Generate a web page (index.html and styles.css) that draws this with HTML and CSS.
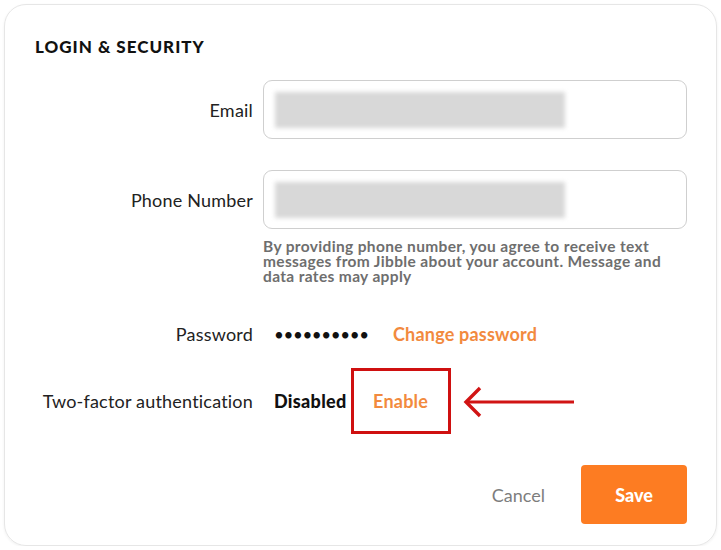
FILE: index.html
```html
<!DOCTYPE html>
<html lang="en">
<head>
    <meta charset="UTF-8">
    <meta name="viewport" content="width=device-width, initial-scale=1.0">
    <title>Login & Security</title>
    <link rel="stylesheet" href="styles.css">
</head>
<body>
    <div class="card">
        <h1 class="title">LOGIN &amp; SECURITY</h1>

        <div class="row row-input">
            <label class="label">Email</label>
            <div class="field">
                <div class="input"><span class="blur"></span></div>
            </div>
        </div>

        <div class="row row-input row-phone">
            <label class="label">Phone Number</label>
            <div class="field">
                <div class="input"><span class="blur"></span></div>
            </div>
        </div>
        <p class="hint">By providing phone number, you agree to receive text messages from Jibble about your account. Message and data rates may apply</p>

        <div class="row row-password">
            <span class="label">Password</span>
            <div class="value">
                <span class="dots">&bull;&bull;&bull;&bull;&bull;&bull;&bull;&bull;&bull;&bull;</span>
                <a class="link" href="#">Change password</a>
            </div>
        </div>

        <div class="row row-2fa">
            <span class="label">Two-factor authentication</span>
            <div class="value">
                <span class="status">Disabled</span>
                <span class="highlight"><a class="link" href="#">Enable</a></span>
                <svg class="arrow" width="112" height="34" viewBox="0 0 112 34">
                    <line x1="4" y1="17" x2="111" y2="17" stroke="#d11414" stroke-width="3"/>
                    <polyline points="17,3 3,17 17,31" fill="none" stroke="#d11414" stroke-width="3.4"/>
                </svg>
            </div>
        </div>

        <div class="actions">
            <button class="cancel">Cancel</button>
            <button class="save">Save</button>
        </div>
    </div>
</body>
</html>
```

FILE: styles.css
```css
* {
    margin: 0;
    padding: 0;
    box-sizing: border-box;
    font-family: 'Lato', 'Noto Sans', sans-serif;
}

body {
    background: #fff;
}

.card {
    margin: 4px 4px 0 4px;
    width: 713px;
    height: 542px;
    border: 1px solid #e6e6e6;
    border-radius: 22px;
    box-shadow: 0 1px 3px rgba(0,0,0,0.06);
    padding: 32px 29px 20px 30px;
}

.title {
    font-size: 17px;
    font-weight: 900;
    color: #111;
    line-height: 20px;
    letter-spacing: 1px;
}

.row {
    display: grid;
    grid-template-columns: 218px 1fr;
    column-gap: 10px;
    align-items: center;
}

.label {
    text-align: right;
    font-size: 18px;
    letter-spacing: 0.2px;
    color: #222;
}

.row-input {
    margin-top: 23px;
}

.row-phone {
    margin-top: 31px;
}

.input {
    height: 59px;
    border: 1px solid #cfcfcf;
    border-radius: 9px;
    padding: 11px 0 0 11px;
}

.blur {
    display: block;
    width: 290px;
    height: 36px;
    background: #d8d8d8;
    filter: blur(2px);
}

.hint {
    margin: 10px 0 0 228px;
    font-size: 15.5px;
    font-weight: 700;
    line-height: 15px;
    letter-spacing: 0.35px;
    color: #6e6e6e;
    max-width: 418px;
}

.row-password {
    margin-top: 36px;
    height: 28px;
}

.value {
    display: flex;
    align-items: center;
    padding-left: 11px;
}

.dots {
    font-size: 17px;
    letter-spacing: -0.4px;
    color: #111;
    width: 119px;
}

.link {
    color: #f28a3e;
    font-weight: 700;
    font-size: 18px;
    letter-spacing: 0.2px;
    text-decoration: none;
}

.row-2fa {
    margin-top: 20px;
}

.status {
    font-weight: 900;
    font-size: 18px;
    letter-spacing: 0.3px;
    color: #111;
}

.highlight {
    margin-left: 4px;
    width: 100px;
    height: 66px;
    border: 3px solid #cf1010;
    display: flex;
    align-items: center;
    justify-content: center;
}

.arrow {
    margin-left: 12px;
    margin-top: 2px;
}

.actions {
    display: flex;
    justify-content: flex-end;
    align-items: center;
    margin-top: 31px;
}

.cancel {
    background: none;
    border: none;
    font-size: 18px;
    color: #7d7d7d;
    margin-right: 36px;
    cursor: pointer;
}

.save {
    width: 106px;
    height: 59px;
    background: #fd7c22;
    color: white;
    border: none;
    border-radius: 4px;
    font-size: 18px;
    font-weight: 900;
    cursor: pointer;
}
```
